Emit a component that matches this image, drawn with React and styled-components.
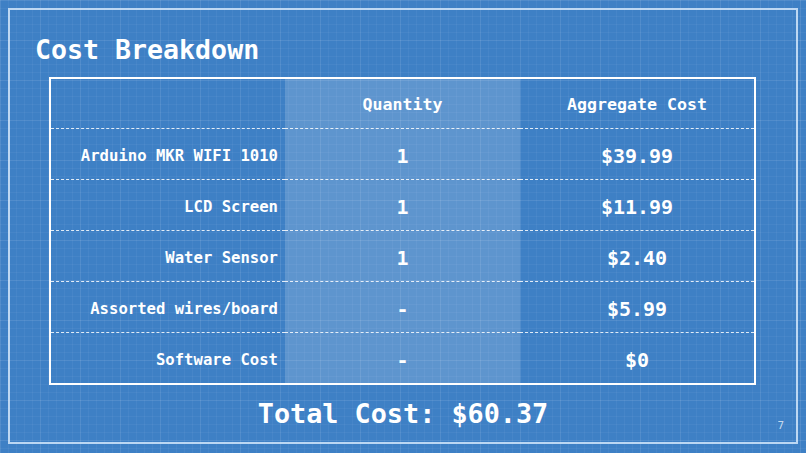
import styled, { createGlobalStyle } from "styled-components";

const GlobalStyle = createGlobalStyle`
  html, body {
    margin: 0;
    padding: 0;
    background: #3d7fc5;
  }
  body {
    font-family: "DejaVu Sans Mono", "Liberation Mono", monospace;
  }
`;

const items = [
  { name: "Arduino MKR WIFI 1010", qty: "1", cost: "$39.99" },
  { name: "LCD Screen", qty: "1", cost: "$11.99" },
  { name: "Water Sensor", qty: "1", cost: "$2.40" },
  { name: "Assorted wires/board", qty: "-", cost: "$5.99" },
  { name: "Software Cost", qty: "-", cost: "$0" },
];

export default function App() {
  return (
    <>
      <GlobalStyle />
      <Slide>
        <Frame>
          <Title>Cost Breakdown</Title>
          <Table>
            <Cell />
            <Cell $band $head>Quantity</Cell>
            <Cell $head>Aggregate Cost</Cell>
            {items.map((it) => (
              <Row key={it.name}>
                <Cell $label $dashed>{it.name}</Cell>
                <Cell $band $value $dashed>{it.qty}</Cell>
                <Cell $value $dashed>{it.cost}</Cell>
              </Row>
            ))}
          </Table>
          <Total>Total Cost: $60.37</Total>
          <PageNumber>7</PageNumber>
        </Frame>
      </Slide>
    </>
  );
}

const Slide = styled.div`
  width: 806px;
  height: 453px;
  box-sizing: border-box;
  padding: 8px 8px 9px 8px;
  background-color: #3e80c5;
  background-image:
    linear-gradient(rgba(255, 255, 255, 0.06) 1px, transparent 1px),
    linear-gradient(90deg, rgba(255, 255, 255, 0.06) 1px, transparent 1px),
    linear-gradient(rgba(255, 255, 255, 0.045) 1px, transparent 1px),
    linear-gradient(90deg, rgba(255, 255, 255, 0.045) 1px, transparent 1px);
  background-size: 40px 40px, 40px 40px, 8px 8px, 8px 8px;
  color: #ffffff;
`;

const Frame = styled.div`
  position: relative;
  height: 100%;
  box-sizing: border-box;
  border: 2px solid rgba(210, 230, 250, 0.85);
  display: flex;
  flex-direction: column;
`;

const Title = styled.h1`
  margin: 24px 0 0 25px;
  font-size: 26.6px;
  line-height: 32px;
  font-weight: bold;
  letter-spacing: 0;
`;

const Table = styled.div`
  margin: 11px 0 0 39px;
  width: 707px;
  box-sizing: border-box;
  border: 2px solid #ffffff;
  display: grid;
  grid-template-columns: 234px 235px 234px;
  grid-template-rows: 49px repeat(5, 51px);
`;

const Row = styled.div`
  display: contents;
`;

const Cell = styled.div`
  display: flex;
  align-items: center;
  justify-content: ${(p) => (p.$label ? "flex-end" : "center")};
  padding-right: ${(p) => (p.$label ? "7px" : "0")};
  padding-top: ${(p) => (p.$dashed ? "3px" : "2px")};
  background: ${(p) => (p.$band ? "rgba(255, 255, 255, 0.17)" : "transparent")};
  border-top: ${(p) => (p.$dashed ? "1px dashed rgba(255, 255, 255, 0.85)" : "none")};
  font-weight: bold;
  font-size: ${(p) => (p.$value ? "20px" : p.$head ? "16.6px" : "15.6px")};
`;

const Total = styled.div`
  flex: 1;
  display: flex;
  align-items: center;
  justify-content: center;
  font-size: 26.8px;
  font-weight: bold;
`;

const PageNumber = styled.span`
  position: absolute;
  right: 12px;
  bottom: 10px;
  font-size: 11px;
  color: rgba(235, 242, 250, 0.8);
`;
